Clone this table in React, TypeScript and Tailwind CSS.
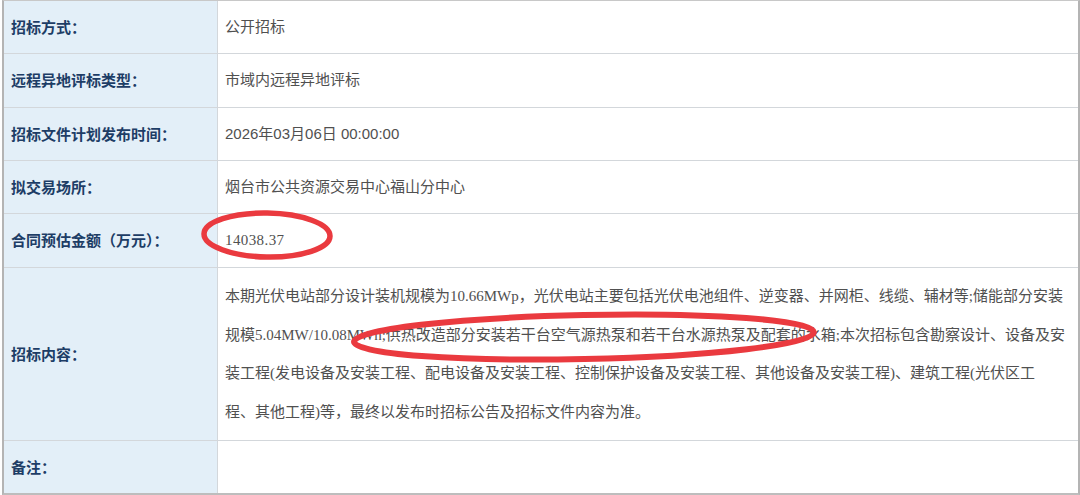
const labelFont = { fontFamily: '"Noto Sans CJK SC", "Liberation Sans", sans-serif' };

type Row = { label: string; value?: string; lines?: string[]; h: string; sans?: boolean };

const rows: Row[] = [
  { label: "招标方式：", value: "公开招标", h: "h-[52px]" },
  { label: "远程异地评标类型：", value: "市域内远程异地评标", h: "h-[53px]" },
  { label: "招标文件计划发布时间：", value: "2026年03月06日 00:00:00", h: "h-[52px]", sans: true },
  { label: "拟交易场所：", value: "烟台市公共资源交易中心福山分中心", h: "h-[52px]" },
  { label: "合同预估金额（万元）：", value: "14038.37", h: "h-[53px]" },
  {
    label: "招标内容：",
    lines: [
      "本期光伏电站部分设计装机规模为10.66MWp，光伏电站主要包括光伏电池组件、逆变器、并网柜、线缆、辅材等;储能部分安装",
      "规模5.04MW/10.08MWh;供热改造部分安装若干台空气源热泵和若干台水源热泵及配套的水箱;本次招标包含勘察设计、设备及安",
      "装工程(发电设备及安装工程、配电设备及安装工程、控制保护设备及安装工程、其他设备及安装工程)、建筑工程(光伏区工",
      "程、其他工程)等，最终以发布时招标公告及招标文件内容为准。",
    ],
    h: "h-[172px]",
  },
  { label: "备注：", value: "", h: "h-[52px]" },
];

export default function App() {
  return (
    <div className="relative w-[1080px] h-[495px] bg-white overflow-hidden">
      <div className="ml-[2px] border-l-2 border-r-2 border-t border-b-2 border-l-[#b4b4b4] border-r-[#b4b4b4] border-t-[#c8c8c8] border-b-[#bdbdbd]">
        {rows.map((r, i) => (
          <div
            key={i}
            className={`grid grid-cols-[214px_1fr] ${i < rows.length - 1 ? "border-b border-[#d3d7db]" : ""}`}
          >
            <div
              className={`${r.h} flex items-center pl-[7px] bg-[#e3eff8] border-r border-[#d3d7db] text-[15px] font-bold text-[#1d3d66]`}
              style={labelFont}
            >
              {r.label}
            </div>
            <div
              className={`${r.h} flex items-center pl-[7px] text-[15px] text-[#505050]`}
              style={{
                fontFamily: r.sans
                  ? '"Liberation Sans", "Noto Sans CJK SC", sans-serif'
                  : '"Liberation Serif", "Noto Sans CJK SC", serif',
              }}
            >
              {r.lines ? (
                <div className="flex flex-col leading-[38.5px]">
                  {r.lines.map((l, j) => (
                    <span key={j} className="whitespace-nowrap">
                      {l}
                    </span>
                  ))}
                </div>
              ) : (
                <span className={r.value === "14038.37" ? "tracking-[0.4px]" : ""}>{r.value}</span>
              )}
            </div>
          </div>
        ))}
      </div>

      {/* red hand-drawn annotations */}
      <svg
        className="absolute inset-0 pointer-events-none"
        width="1080"
        height="495"
        viewBox="0 0 1080 495"
      >
        <ellipse
          cx="267"
          cy="235"
          rx="63"
          ry="22"
          fill="none"
          stroke="#ea3a3f"
          strokeWidth="5.5"
          transform="rotate(1 267 235)"
        />
        <ellipse
          cx="584"
          cy="337"
          rx="230"
          ry="22"
          fill="none"
          stroke="#ea3a3f"
          strokeWidth="6"
          transform="rotate(-1.2 584 337)"
        />
      </svg>
    </div>
  );
}
